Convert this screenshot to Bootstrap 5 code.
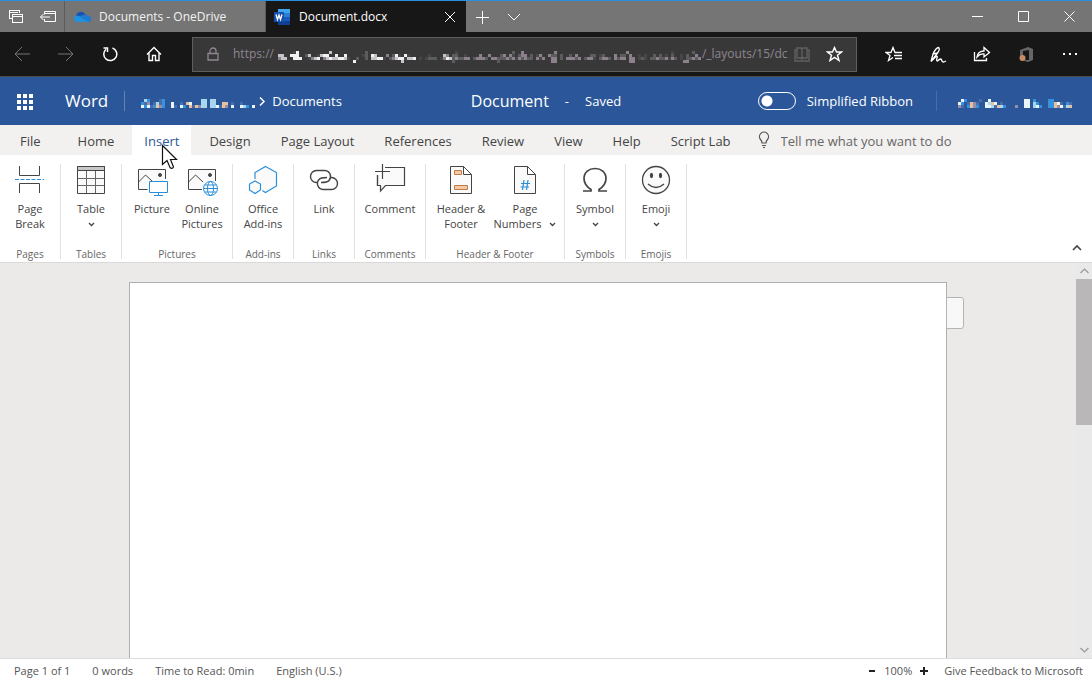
<!DOCTYPE html>
<html lang="en">
<head>
<meta charset="utf-8">
<meta name="viewport" content="width=device-width, initial-scale=1">
<title>Document.docx</title>
<link href="https://cdn.jsdelivr.net/npm/bootstrap@5.3.0/dist/css/bootstrap.min.css" rel="stylesheet">
<style>
body{font-family:"Open Sans","Noto Sans",sans-serif;font-size:13px;line-height:18px;color:#444;background:#ebeae9}
button{border:0;background:none;color:inherit;padding:0}
a{color:inherit;text-decoration:none}
svg{display:block;fill:none;flex-shrink:0}
svg:not([stroke]){stroke:currentColor}
.ic{display:flex;align-items:center;justify-content:center;flex-shrink:0}
.titlebar{height:32px;background:#757575;border-top:1px solid #2b90dc;color:#fff}
.titlebar .ic{width:32px}
.titlebar .win{width:46px}
.browser-tab{width:202px;padding-left:8px;border-left:1px solid #5c5c5c;border-right:1px solid #5c5c5c;color:#f2f2f2;font-size:12px}
.browser-tab.current{width:200px;background:#171717;border:0;color:#fff}
.toolbar-dark{height:45px;background:#171717;border-bottom:1px solid #4c4a4a;color:#fff}
.toolbar-dark .ic{width:44px;height:44px}
.toolbar-dark .dim{color:#757575}
.address{height:35px;background:#383838;border:1px solid #5d5f5e;margin:0 15px 0 16px;padding-right:2px;color:#8e8590}
.toolbar-dark .address .ic{width:32px;height:32px}
.toolbar-dark .address .lock{width:40px}
.url{font-size:12px;min-width:0}
.url .mosaic{margin:6px 1px 0 4px}
.appbar{display:grid;grid-template-columns:1fr auto 1fr;height:48px;background:#2b579a;color:#fff}
.appbar .mosaic{margin-top:4px}
.app-name{font-size:17px}
.doc-name{font-size:16px}
.crumb{margin:0 5px 0 2px}
.rule{width:1px;height:20px;background:#6583b3}
.account{padding-right:20px}
.account label{margin-left:11px}
.account .rule{margin:0 21px 0 23px}
.form-check-input.ribbon-switch{width:38px;height:18px;margin:0;border:1px solid #fff;background-color:transparent;background-size:auto;background-position:0 center;background-image:radial-gradient(circle at 8px 8px,#fff 5px,transparent 6px)}
.ribbon-tabs{height:30px;background:#f2f1f0;gap:6px}
.ribbon-tabs button{padding:2px 12px 0;position:relative;white-space:nowrap}
.ribbon-tabs .first{padding:2px 19px 0 20px}
.ribbon-tabs .active{background:#fff;color:#2b579a}
.pointer{position:absolute;left:29px;top:19px;z-index:2}
.tellme{border:0;background:none;padding:2px 0 0;color:#444;width:200px;outline:0}
.tellme::placeholder{color:#666;opacity:1}
.ribbon{height:108px;background:#fff;border-bottom:1px solid #dad9d8;padding-top:9px}
.tool-group{height:95px;padding:0 5px;border-right:1px solid #e1e1e1;font-size:11px;line-height:15px}
.tool-group button{min-width:50px;height:85px;display:flex;flex-direction:column;align-items:center}
.tool-group .wide{min-width:68px}
.tool-group .medium{min-width:60px}
.tool-group svg.big{width:32px;height:32px;margin-bottom:5px}
.group-name{font-size:10px;line-height:10px;color:#666;text-align:center}
.fold{padding:0 8px 10px 0}
.canvas{min-height:360px}
.sheet{width:76%;background:#fff;border:1px solid #b1afae;border-bottom:0;margin:19px auto 0;position:relative}
.side-tag{position:absolute;left:100%;top:14px;width:18px;height:32px;background:#f8f8f8;border:1px solid #b5b4b3;border-radius:0 3px 3px 0}
.scroller{width:16px;background:#e9e9e9;color:#999}
.scroller .ic{height:16px}
.thumb{height:146px;background:#b9b7b8}
.statusbar{height:23px;background:#fff;border-top:1px solid #dddcdb;font-size:11px;padding:1px 9px 0 14px;color:#555}
.status-left{gap:22px}
</style>
</head>
<body class="d-flex flex-column min-vh-100">
<div class="titlebar d-flex">
  <button class="ic" aria-label="Tabs set aside"><svg width="16" height="16" viewBox="0 0 16 16" shape-rendering="crispEdges"><path d="M1.5 9.500V1.500H11.500V3.500M1.500 3.500H10M1.500 9.500H3.500M4.500 5.500H14.500V13.500H4.500ZM4.500 7.500H14.500"/></svg></button>
  <button class="ic" aria-label="Set tabs aside"><svg width="18" height="14" viewBox="0 0 18 14"><path d="M5.500 4.500V1.500H16.500V11.500H5.500V9M5.500 3.500H16.500M1.500 7H11M4.500 4L1.500 7L4.500 10"/></svg></button>
  <div class="browser-tab d-flex align-items-center">
    <svg width="18" height="12" viewBox="0 0 18 12" stroke="none"><path fill="#1653b5" d="M3 5A5 5 0 0 1 12 3L15 6L5 9Z"/><path fill="#2390dd" d="M1 6Q4 3 8 6L16 10Q14 12 12 11H4A4 4 0 0 1 1 6Z"/><path fill="#1f7bd0" d="M7 5Q13 2 15 5A3 3 0 0 1 16 11L10 8Z"/></svg>
    <span class="ms-2">Documents - OneDrive</span>
  </div>
  <div class="browser-tab current d-flex align-items-center">
    <svg width="17" height="16" viewBox="0 0 17 16" stroke="none"><path fill="#41a5ee" d="M4 0H16V4H4Z"/><path fill="#2b7cd3" d="M4 4H16V8H4Z"/><path fill="#185abd" d="M4 8H16V12H4Z"/><path fill="#103f91" d="M4 12H16V16H4Z"/><path fill="#174fae" d="M0 3H10V13H0Z"/><path stroke="#fff" stroke-width="1.300" d="M2 5.500L3.500 10.500L5 6L6.500 10.500L8 5.500"/></svg>
    <span class="ms-2 flex-grow-1">Document.docx</span>
    <button class="ic" aria-label="Close tab"><svg width="12" height="12" viewBox="0 0 12 12"><path d="M1 1L11 11M11 1L1 11"/></svg></button>
  </div>
  <button class="ic" aria-label="New tab"><svg width="14" height="14" viewBox="0 0 14 14"><path d="M7.500 1V14M1 7.500H14"/></svg></button>
  <button class="ic" aria-label="Tab previews"><svg width="14" height="8" viewBox="0 0 14 8"><path d="M1 1L7 7L13 1"/></svg></button>
  <button class="ic win ms-auto" aria-label="Minimize"><svg width="11" height="11" viewBox="0 0 11 11"><path d="M0 5.500H11"/></svg></button>
  <button class="ic win" aria-label="Maximize"><svg width="11" height="11" viewBox="0 0 11 11"><path d="M.5.500H10.500V10.500H.5Z"/></svg></button>
  <button class="ic win" aria-label="Close"><svg width="11" height="11" viewBox="0 0 11 11"><path d="M.5.500L10.500 10.500M10.500.500L.5 10.500"/></svg></button>
</div>

<div class="toolbar-dark d-flex align-items-center">
  <button class="ic dim" aria-label="Back"><svg width="16" height="16" viewBox="0 0 16 16"><path d="M1 8H16M8 1L1 8L8 15"/></svg></button>
  <button class="ic dim" aria-label="Forward"><svg width="16" height="16" viewBox="0 0 16 16"><path d="M0 8H15M8 1L15 8L8 15"/></svg></button>
  <button class="ic" aria-label="Refresh"><svg width="16" height="16" viewBox="0 0 16 16" stroke-width="1.500"><path d="M10.500 2A6.500 6.500 0 1 1 4 3.200M1.500 2H5.500V6"/></svg></button>
  <button class="ic" aria-label="Home"><svg width="16" height="16" viewBox="0 0 16 16" stroke-width="1.400"><path d="M1 8.500L8 1.500L15 8.500M3 7V14.500H6.500V9.500H9.500V14.500H13V7"/></svg></button>
  <div class="address d-flex align-items-center flex-grow-1 overflow-hidden">
    <span class="ic lock"><svg width="12" height="14" viewBox="0 0 12 14" stroke-width="1.300"><path d="M1 6.500H11V13H1ZM3 6.500V4A3 3 0 0 1 9 4V6.500"/></svg></span>
    <div class="url d-flex align-items-center flex-grow-1"><span>https://</span><svg class="mosaic" stroke="none" data-name="url" aria-hidden="true"></svg><span>/_layouts/15/dc</span></div>
    <button class="ic" style="color:#606060" aria-label="Reading view"><svg width="16" height="15" viewBox="0 0 16 15" stroke-width="1.400"><path d="M3 1H7L8 2L9 1H13V11H9L8 12L7 11H3ZM8 2V12M3 3H1V14H15V3H13"/></svg></button>
    <button class="ic text-white me-1" aria-label="Add to favorites"><svg width="17" height="16" viewBox="0 0 17 16" stroke-width="1.400"><path d="M8.500 1.500L10.500 6H15.500L11.500 9.300L13 14.500L8.500 11.400L4 14.500L5.500 9.300L1.500 6H6.500Z"/></svg></button>
  </div>
  <button class="ic" aria-label="Favorites"><svg width="18" height="16" viewBox="0 0 18 16" stroke-width="1.300"><path d="M17 6.500H10L8 1.500L6 6.500H1L5 9.500L3.500 14.500L8 11.500M9 9.500H17M10 12.500H17"/></svg></button>
  <button class="ic" aria-label="Add notes"><svg width="18" height="17" viewBox="0 0 18 17" stroke-width="1.300"><path d="M2 15.500L4 8Q7 1.500 9.500 1.500Q11.500 3 8.500 7L2 15.500M4 8L8.500 7M2 15.500L7 10.500Q9 9.500 8 12Q7 15 8.500 15Q10.500 13 11.500 13T13 15T17 15"/></svg></button>
  <button class="ic" aria-label="Share"><svg width="18" height="16" viewBox="0 0 18 16" stroke-width="1.300"><path d="M1.500 6V14.500H13.500V12M4 11Q5 5 11 5V1.500L16.500 6.500L11 11V8Q7 7.500 4 11Z"/></svg></button>
  <button class="ic" aria-label="Office"><svg width="16" height="17" viewBox="0 0 16 17" stroke="none"><path fill="#666" d="M2 4L10 1L15 3V14L10 16L4 14H11V4L5 5V10H2Z"/><circle cx="4.500" cy="12" r="3" fill="#c88b66"/></svg></button>
  <button class="ic" aria-label="More"><svg width="16" height="4" viewBox="0 0 16 4" stroke="none"><path fill="#fff" d="M1 1H3V3H1ZM7 1H9V3H7ZM13 1H15V3H13Z"/></svg></button>
</div>

<header class="appbar">
  <div class="d-flex align-items-center">
    <button class="ic ms-3" aria-label="App launcher"><svg width="17" height="17" viewBox="0 0 17 17" stroke="none"><path fill="#fff" d="M1 1H5V5H1ZM7 1H11V5H7ZM13 1H17V5H13ZM1 7H5V11H1ZM7 7H11V11H7ZM13 7H17V11H13ZM1 13H5V17H1ZM7 13H11V17H7ZM13 13H17V17H13Z"/></svg></button>
    <a href="#" class="app-name ms-4 ps-2">Word</a>
    <span class="rule ms-3 me-3"></span>
    <svg class="mosaic" stroke="none" data-name="owner" aria-hidden="true"></svg>
    <svg class="crumb" width="10" height="9" viewBox="0 0 10 9" stroke-width="1.500"><path d="M3 .5L7 4.500L3 8.500"/></svg>
    <a href="#">Documents</a>
  </div>
  <div class="d-flex align-items-center"><span class="doc-name">Document</span><span class="px-3">-</span><span>Saved</span></div>
  <div class="account d-flex align-items-center justify-content-end">
    <input class="form-check-input ribbon-switch rounded-pill" type="checkbox" role="switch" id="simple">
    <label class="text-nowrap" for="simple">Simplified Ribbon</label>
    <span class="rule opacity-50"></span>
    <svg class="mosaic" stroke="none" data-name="user" aria-hidden="true"></svg>
  </div>
</header>

<nav class="ribbon-tabs d-flex">
  <button class="first">File</button><button>Home</button>
  <button class="active">Insert<svg class="pointer" width="17" height="27" viewBox="0 0 17 27" stroke="#111"><path fill="#fff" stroke-width="1.200" d="M1.500 1.500V20.500L6 16.500L9 23.500Q11 25.500 12.500 23L9.500 15.500H15.500Z"/></svg></button>
  <button>Design</button><button>Page Layout</button><button>References</button><button>Review</button><button>View</button><button>Help</button><button>Script Lab</button>
  <label class="d-flex align-items-center ps-2 pe-1" for="tell"><svg width="14" height="18" viewBox="0 0 14 18" stroke="#555" stroke-width="1.200"><path d="M5 12Q5 10 3.500 8.500A4.500 4.500 0 1 1 10.500 8.500Q9 10 9 12ZM5 14.500H9M6 16.500H8"/></svg></label>
  <input id="tell" class="tellme" placeholder="Tell me what you want to do">
</nav>

<div class="ribbon d-flex text-nowrap">
  <div class="tool-group"><button><svg class="big" viewBox="0 0 32 32"><path stroke="#444" d="M5.500 2V11.500H25.500V2M5.500 29V19.500H25.500V29"/><path stroke="#2b8fd8" stroke-dasharray="4 1.500" d="M1 15.500H30"/></svg>Page<br>Break</button><div class="group-name">Pages</div></div>
  <div class="tool-group"><button><svg class="big" viewBox="0 0 32 32"><path fill="#fafafa" stroke="#444" d="M2.500 2.500H29.500V29.500H2.500Z"/><path fill="#c8c8c8" stroke="#444" d="M2.500 2.500H29.500V6.500H2.500Z"/><path stroke="#666" d="M11.500 7V29M20.500 7V29M3 14.500H29M3 21.500H29"/></svg>Table<svg width="7" height="15" viewBox="0 0 7 15" stroke-width="1.300"><path d="M1 7L3.500 9.500L6 7"/></svg></button><div class="group-name">Tables</div></div>
  <div class="tool-group"><div class="d-flex">
    <button><svg class="big" viewBox="0 0 32 32"><path fill="#fafafa" stroke="#444" d="M11.500 25.500H2.500V5.500H29.500V15"/><path stroke="#444" d="M2.500 18L9.500 11L16 17"/><circle cx="24" cy="11" r="1.500" fill="#444" stroke="#444"/><path fill="#fff" stroke="#2b8fd8" d="M13.500 17.500H31.500V28.500H13.500ZM22.500 28.500V31.500M18 31.500H27"/></svg>Picture</button>
    <button><svg class="big" viewBox="0 0 32 32"><path fill="#fafafa" stroke="#444" d="M16 25.500H2.500V5.500H29.500V17"/><path stroke="#444" d="M2.500 18L9.500 11L17 18"/><circle cx="24" cy="11" r="1.500" fill="#444" stroke="#444"/><g stroke="#2b8fd8"><circle cx="24.500" cy="24.500" r="7" fill="#fff"/><ellipse cx="24.500" cy="24.500" rx="3" ry="7"/><path d="M17.500 24.500H31.500M18.500 21H30.500M18.500 28H30.500"/></g></svg>Online<br>Pictures</button>
  </div><div class="group-name">Pictures</div></div>
  <div class="tool-group"><button><svg class="big" viewBox="0 0 32 32"><g fill="#fafafa" stroke="#2b8fd8" stroke-width="1.200"><path d="M18.500 2.500L29.500 8.500V22L18.500 28.500L8 22V8.500Z"/><path stroke="#fff" stroke-width="4" d="M8 17L13.500 20V26L8 29.500L2.500 26V20Z"/><path d="M8 17L13.500 20V26L8 29.500L2.500 26V20Z"/></g></svg>Office<br>Add-ins</button><div class="group-name">Add-ins</div></div>
  <div class="tool-group"><button><svg class="big" viewBox="0 0 32 32" stroke="#444" stroke-width="1.400"><path d="M10 18.500H8.500A6 6 0 0 1 8.500 6.500H17A6 6 0 0 1 21 16.500Q19.500 18.500 13 18.500M22 13.500H23.500A6 6 0 0 1 23.500 25.500H15A6 6 0 0 1 11 15.500Q12.500 13.500 19 13.500"/></svg>Link</button><div class="group-name">Links</div></div>
  <div class="tool-group"><button class="medium"><svg class="big" viewBox="0 0 32 32" stroke="#444" stroke-width="1.200"><path fill="#fafafa" d="M3.500 3.500H30.500V21.500H11.500L6.500 27V21.500H3.500Z"/><path stroke="#fff" stroke-width="5" d="M8.500 0V15M1 7.500H16M3.500 3V11"/><path d="M8.500 0V15M1 7.500H16M3.500 11V21.500H6.500M11 3.500H30.500"/></svg>Comment</button><div class="group-name">Comments</div></div>
  <div class="tool-group"><div class="d-flex">
    <button class="medium"><svg class="big" viewBox="0 0 32 32"><path fill="#fafafa" stroke="#444" d="M5.500 2.500H18.500L26.500 10.500V29.500H5.500ZM18.500 2.500V10.500H26.500"/><path fill="#f4caa6" stroke="#c07c48" d="M9.500 6.500H16.500V10.500H9.500ZM9.500 21.500H22.500V25.500H9.500Z"/></svg>Header &amp;<br>Footer</button>
    <button class="wide"><svg class="big" viewBox="0 0 32 32"><path fill="#fafafa" stroke="#444" d="M5.500 2.500H18.500L26.500 10.500V29.500H5.500ZM18.500 2.500V10.500H26.500"/><path stroke="#2b8fd8" stroke-width="1.200" d="M15 16L13.500 26M19 16L17.500 26M12 19.500H21M11.500 23H20"/></svg>Page<span class="d-flex gap-2">Numbers <svg width="7" height="15" viewBox="0 0 7 15" stroke-width="1.300"><path d="M1 7L3.500 9.500L6 7"/></svg></span></button>
  </div><div class="group-name">Header &amp; Footer</div></div>
  <div class="tool-group"><button><svg class="big" viewBox="0 0 32 32" stroke="#444" stroke-width="1.700"><path d="M4 27H12V25.500Q5 21 5 14.500C5 8 10 4.500 16 4.500S27 8 27 14.500Q27 21 20 25.500V27H28"/></svg>Symbol<svg width="7" height="15" viewBox="0 0 7 15" stroke-width="1.300"><path d="M1 7L3.500 9.500L6 7"/></svg></button><div class="group-name">Symbols</div></div>
  <div class="tool-group"><button><svg class="big" viewBox="0 0 32 32" stroke="#444" stroke-width="1.300"><circle cx="16" cy="16" r="13.500" fill="#fafafa"/><ellipse cx="11.500" cy="11.500" rx="1" ry="2" fill="#444"/><ellipse cx="20.500" cy="11.500" rx="1" ry="2" fill="#444"/><path d="M8 20Q16 27 24 20"/></svg>Emoji<svg width="7" height="15" viewBox="0 0 7 15" stroke-width="1.300"><path d="M1 7L3.500 9.500L6 7"/></svg></button><div class="group-name">Emojis</div></div>
  <button class="fold ms-auto align-self-end" aria-label="Collapse ribbon"><svg width="13" height="8" viewBox="0 0 13 8" stroke-width="1.600"><path d="M2 6L6 2L10 6"/></svg></button>
</div>

<div class="canvas d-flex flex-grow-1">
  <main class="flex-grow-1 d-flex"><div class="sheet"><div class="side-tag"></div></div></main>
  <div class="scroller d-flex flex-column">
    <span class="ic"><svg width="9" height="6" viewBox="0 0 9 6" stroke-width="1.200"><path d="M.5 5L4.500 1L8.500 5"/></svg></span>
    <div class="thumb"></div>
    <span class="ic mt-auto"><svg width="9" height="6" viewBox="0 0 9 6" stroke-width="1.200"><path d="M.5 1L4.500 5L8.500 1"/></svg></span>
  </div>
</div>

<footer class="statusbar d-flex align-items-center">
  <div class="d-flex status-left"><span>Page 1 of 1</span><span>0 words</span><span>Time to Read: 0min</span><span>English (U.S.)</span></div>
  <div class="d-flex align-items-center ms-auto">
    <button aria-label="Zoom out"><svg width="8" height="8" viewBox="0 0 8 8" stroke="#222" stroke-width="2"><path d="M1 4H7"/></svg></button>
    <span class="mx-2">100%</span>
    <button aria-label="Zoom in"><svg width="8" height="8" viewBox="0 0 8 8" stroke="#222" stroke-width="2"><path d="M0 4H8M4 0V8"/></svg></button>
    <a href="#" class="ms-3">Give Feedback to Microsoft</a>
  </div>
</footer>
<script src="https://cdn.jsdelivr.net/npm/bootstrap@5.3.0/dist/js/bootstrap.bundle.min.js"></script>
<script>
// Redacted names: each character is one 3px cell, looked up in the palette.
const palette={1:'#474747',2:'#5c5c5c',3:'#8b808c',4:'#c6c2ca',5:'#f0f0f0',w:'#e8f5fb',b:'#3593de',c:'#a9d6ef',p:'#e8c09d',g:'#9690a6',d:'#486da8'};
const art={
 url:[
 "000001500000000004000000000002000000000000000000000000000001000000000000000000200300000000003000000000000000000000003000000000000001000000200",
 "440055500240014550050050000012054000302510510000001000043022001000030030002303102330201300322020020300002201200030220300101002020102001020030",
 "344005550013450345445541002002044551023455144501012220135423223302333203322232313232203130033020333230233102332032330330121022322313201022323",
 "000000000000000000000000050000000000000004000000000000000020000000000000020000000000000000033000000000000000000000000330000000000000000330000"],
 owner:[
 "0cb000db000000000000cc0cc0000000000000",
 "bdg0dcdb00w00d0pw000cc0cc00pp0d00d0000",
 "wbwdbpgb00wd0wb0pdpgcc0ccwdpg0w00wcb0w"],
 user:[
 "0wb0000d00w00000000000ww0b0000bb000000",
 "wb0dpgd00wcpw0d0000000ww0cb000bbpwd0bd",
 "gd0bpgb00wwcdpcb000g00ww0cwb00bbpgwdcp"]};
document.querySelectorAll('.mosaic').forEach(svg=>{
  const rows=art[svg.dataset.name],w=Math.max(...rows.map(r=>r.length));
  svg.setAttribute('width',w*3);svg.setAttribute('height',rows.length*3);
  svg.setAttribute('shape-rendering','crispEdges');
  svg.innerHTML=rows.map((r,y)=>[...r].map((c,x)=>palette[c]?`<rect x="${x*3}" y="${y*3}" width="3" height="3" fill="${palette[c]}"/>`:'').join('')).join('');
});
</script>
</body>
</html>
